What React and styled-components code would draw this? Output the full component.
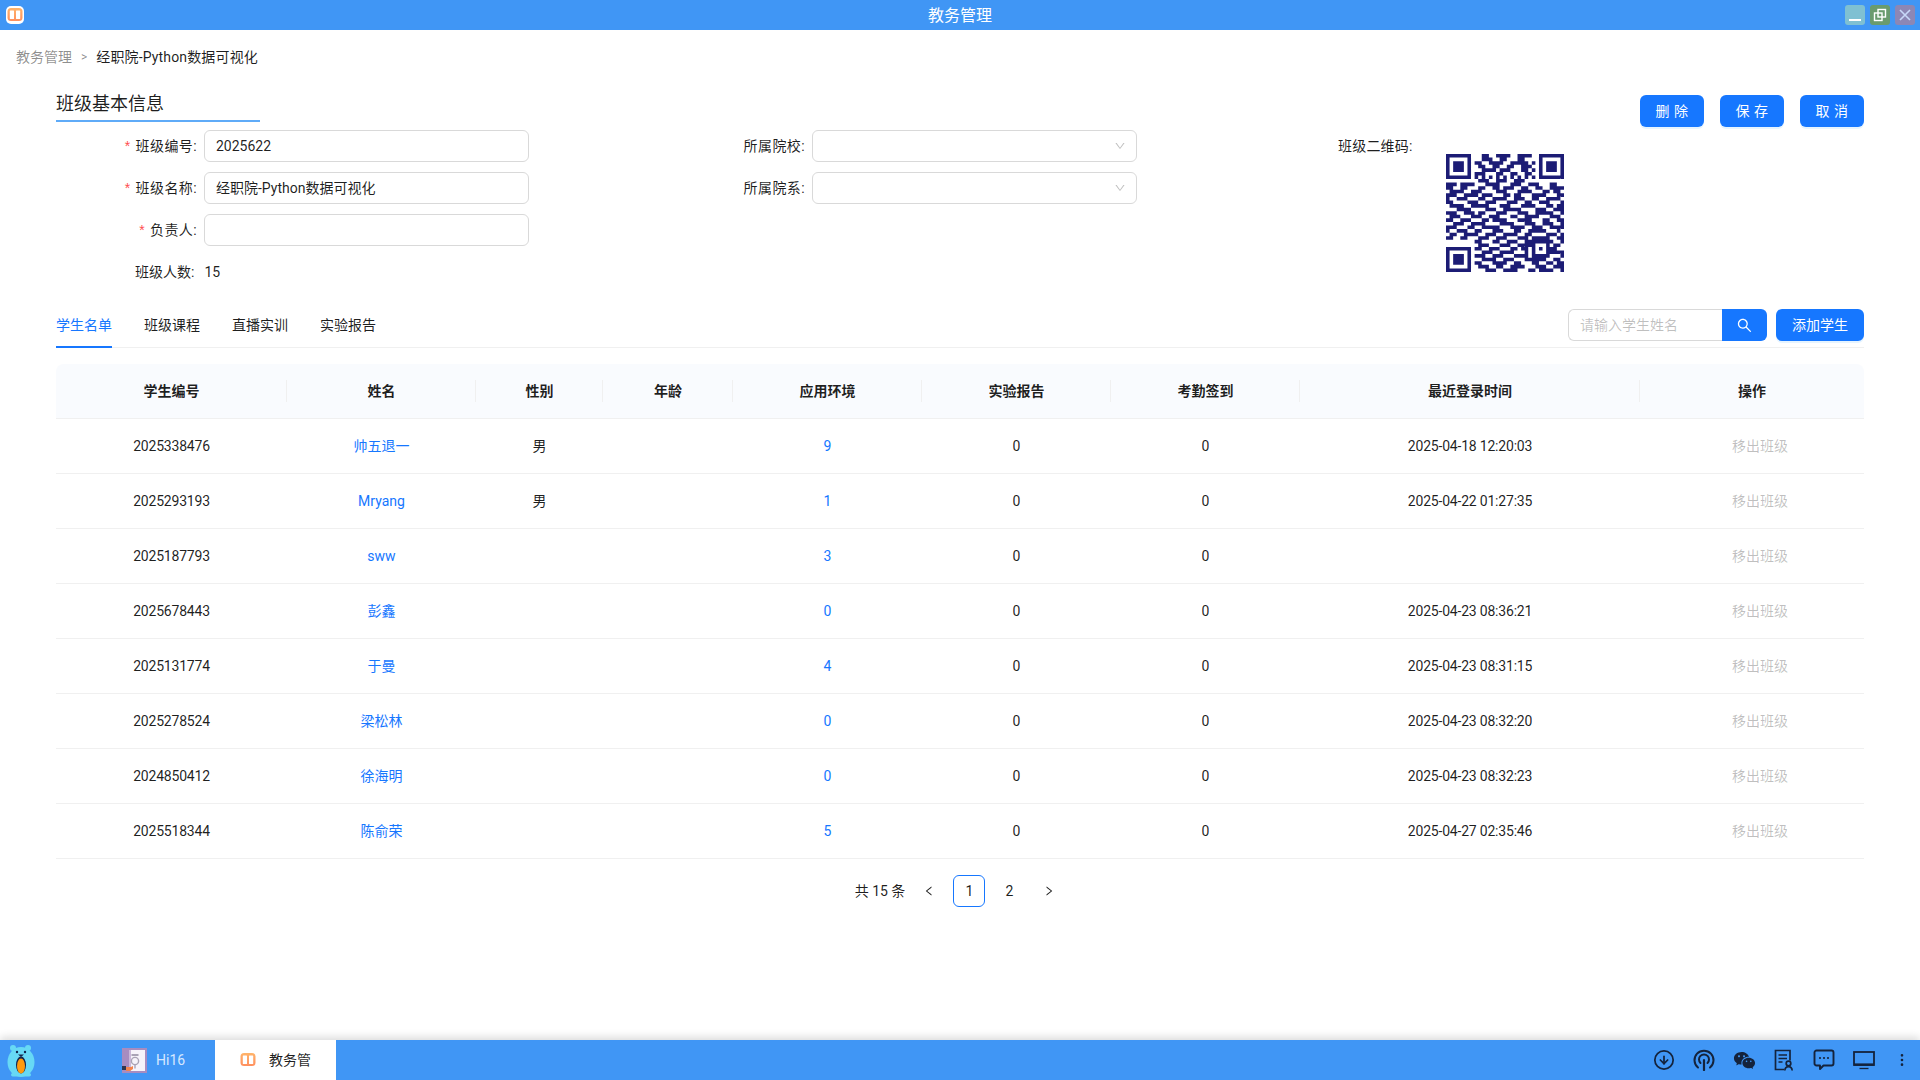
import React from "react";
import styled, { createGlobalStyle } from "styled-components";
import { AiOutlineDown, AiOutlineLeft, AiOutlineRight, AiOutlineSearch } from "react-icons/ai";
import { RiWechatFill } from "react-icons/ri";
import { CircleArrowDown, EllipsisVertical } from "lucide-react";

const FONT = `"Roboto", "Noto Sans CJK SC", sans-serif`;
const COLS = "231px 189px 127px 130px 189px 189px 189px 340px 224px";

const Global = createGlobalStyle`
  html, body { margin: 0; padding: 0; background: #fff; overflow: hidden; }
  * { box-sizing: border-box; }
  body { font-family: ${FONT}; font-size: 14px; line-height: 22px; color: rgba(0,0,0,.88); }
`;

const Page = styled.div`display: flex; flex-direction: column; width: 1920px; height: 1080px;`;
const TitleBar = styled.header`
  position: relative; flex: none; height: 30px; padding-top: 2px; background: #4096f5; display: flex; align-items: center; justify-content: center;
  color: #fff; font-size: 16px;
`;
const AppLogo = styled.span`position: absolute; left: 6px; top: 6px; display: flex;`;
const WinButtons = styled.div`position: absolute; right: 5px; top: 5px; display: flex; gap: 5px;`;
const WinButton = styled.span`
  width: 20px; height: 20px; border-radius: 3px; background: ${p => p.$bg}; display: flex; align-items: center; justify-content: center;
`;
const Content = styled.main`flex: 1; min-height: 0; display: flex; flex-direction: column;`;
const Breadcrumb = styled.nav`display: flex; align-items: center; height: 22px; margin: 16px 0 0 16px; gap: 9px;`;
const CrumbMuted = styled.span`color: rgba(0,0,0,.45);`;
const CrumbSep = styled.span`color: rgba(0,0,0,.45); font-size: 12px;`;
const CrumbCurrent = styled.span`letter-spacing: .15px;`;
const Body = styled.div`padding: 0 56px; display: flex; flex-direction: column;`;
const TopRow = styled.div`display: flex; justify-content: space-between; height: 32px; margin-top: 22px;`;
const SectionTitle = styled.h2`
  margin: 0; width: 204px; height: 32px; font-size: 18px; font-weight: 400; line-height: 28px; border-bottom: 2px solid #5fabf8;
`;
const Actions = styled.div`display: flex; gap: 16px; margin-top: 5px;`;
const Button = styled.button`
  height: 32px; width: ${p => p.$w || 64}px; padding: 0 0 0 ${p => p.$sp ? "4px" : "0"}; border: 0; border-radius: 6px; background: #1677ff; color: #fff;
  font: inherit; font-size: 14px; letter-spacing: ${p => p.$sp ? "4.5px" : "0"}; box-shadow: 0 2px 0 rgba(5,145,255,.1);
`;
const Form = styled.section`display: flex; margin-top: 8px; height: 158px;`;
const Col = styled.div`display: flex; flex-direction: column; gap: 10px; margin-left: ${p => p.$ml || 0}px;`;
const Field = styled.div`display: grid; grid-template-columns: ${p => p.$label}px 325px; align-items: center; height: 32px;`;
const Label = styled.label`text-align: right; padding-right: 7px; white-space: nowrap; letter-spacing: .4px;`;
const Star = styled.span`color: #ff4d4f; margin-right: 5px; font-family: "Liberation Sans", sans-serif;`;
const Input = styled.div`
  height: 32px; border: 1px solid #d9d9d9; border-radius: 6px; padding: 0 11px; display: flex; align-items: center; background: #fff;
`;
const Select = styled(Input)`justify-content: flex-end; padding-right: 10px; color: rgba(0,0,0,.25);`;
const Count = styled.div`display: flex; align-items: center; height: 32px; margin-left: 79px;`;
const CountValue = styled.span`margin-left: 10px;`;
const QrWrap = styled.div`display: flex;`;
const QrLabel = styled.div`height: 32px; display: flex; align-items: center; width: 108px; white-space: nowrap; letter-spacing: .2px;`;
const QrBox = styled.div`margin-top: 24px; width: 118px; height: 118px;`;

const TabRow = styled.div`
  display: flex; align-items: stretch; justify-content: space-between; height: 44px; margin-top: 16px; border-bottom: 1px solid #f0f0f0;
`;
const Tabs = styled.div`display: flex; gap: 32px;`;
const Tab = styled.div`
  position: relative; display: flex; align-items: center; height: 43px; padding-bottom: 2px; color: ${p => p.$active ? "#1677ff" : "rgba(0,0,0,.88)"};
  ${p => p.$active && `&::after{content:"";position:absolute;left:0;right:0;bottom:-1px;height:2px;background:#1677ff;}`}
`;
const Tools = styled.div`display: flex; gap: 9px; padding-top: 5px;`;
const SearchGroup = styled.div`display: flex; height: 32px;`;
const SearchInput = styled.div`
  width: 154px; height: 32px; border: 1px solid #d9d9d9; border-right: 0; border-radius: 6px 0 0 6px; padding: 0 11px; display: flex; align-items: center; color: rgba(0,0,0,.25);
`;
const SearchBtn = styled.button`
  width: 45px; height: 32px; border: 0; border-radius: 0 6px 6px 0; background: #1677ff; color: #fff; padding: 0; display: flex; align-items: center; justify-content: center; font-size: 14px;
`;

const Table = styled.div`margin-top: 16px; width: 1808px;`;
const HeadRow = styled.div`
  display: grid; grid-template-columns: ${COLS}; height: 55px; background: #f9fbfe; border-radius: 8px 8px 0 0; border-bottom: 1px solid #f0f0f0; font-weight: 600;
`;
const HeadCell = styled.div`
  position: relative; display: flex; align-items: center; justify-content: center;
  &:not(:last-child)::after { content: ""; position: absolute; right: 0; top: 16px; height: 22px; width: 1px; background: #f0f0f0; }
`;
const Row = styled.div`display: grid; grid-template-columns: ${COLS}; height: 55px; border-bottom: 1px solid #f0f0f0;`;
const Cell = styled.div`display: flex; align-items: center; justify-content: center; white-space: nowrap; letter-spacing: ${p => p.$tight ? "-.2px" : "0"};`;
const Link = styled.a`color: #1677ff; text-decoration: none;`;
const Remove = styled.span`color: rgba(0,0,0,.25); margin-left: 16px;`;

const Pager = styled.div`display: flex; align-items: center; justify-content: center; height: 32px; margin-top: 16px;`;
const Total = styled.span``;
const PageItem = styled.span`
  width: 32px; height: 32px; margin-left: 8px; border-radius: 6px; display: flex; align-items: center; justify-content: center;
  border: ${p => p.$active ? "1px solid #1677ff" : "0"};
`;
const Taskbar = styled.footer`
  position: relative; flex: none; height: 40px; background: #4096f5; display: flex; align-items: stretch; box-shadow: 0 -3px 8px rgba(0,0,0,.14);
`;
const Mascot = styled.span`display: flex; align-items: center; width: 122px; padding-left: 7px;`;
const TaskItem = styled.div`
  display: flex; align-items: center; height: 40px; width: ${p => p.$w}px; background: ${p => p.$active ? "#fff" : "transparent"};
  padding-left: ${p => p.$pl}px; color: ${p => p.$active ? "rgba(0,0,0,.88)" : "#d6e8ff"}; font-size: 14px; gap: ${p => p.$gap}px;
`;
const Tray = styled.div`margin-left: auto; display: flex; align-items: center; color: #14233c;`;
const TrayIcon = styled.span`width: ${p => p.$w || 40}px; display: flex; justify-content: center;`;

const QR_ROWS = [
"111111100011001111001111011111111",
"100000100011100110001100001000001",
"101110101100111100111110101011101",
"101110100110011001100111001011101",
"101110100011110111000110111011101",
"100000101110001100110011001000001",
"111111101010101010101010101111111",
"000000000111001110011100000000000",
"111011110001111000111001110001100",
"110011000110011011100110011001111",
"011110011100001110001111000110110",
"111001111011100011011000111100011",
"100111000110011110011100110011110",
"110000111001110001110011001110001",
"011110011111000111000111100011011",
"000111100001110011111000011100111",
"111001110110001110001110011111001",
"011100011100111000110011110001110",
"110011100011011110001111000110011",
"001110011110000111100011100111001",
"111000110011111000111100111001111",
"100111001100011100011001111100010",
"011001111001110011110011000011101",
"110011000111001110001110111110011",
"000000001100011001110011100011001",
"111111100111000111001111111110110",
"100000101100111000110110001011100",
"101110100011100111100010101001111",
"101110101110011100011110001110001",
"101110100011110011100011111100110",
"100000101100011110011000110011011",
"101110100111001100111100011100111",
"111111100001110011110001101111001",
];

function Qr() {
  const n = 33;
  const grid = QR_ROWS.map(r => r.padEnd(n, "0").slice(0, n).split("").map(c => c === "1"));
  const finder = (ox, oy) => {
    for (let y = -1; y < 8; y++) for (let x = -1; x < 8; x++) {
      const px = ox + x, py = oy + y;
      if (px < 0 || py < 0 || px >= n || py >= n) continue;
      const on = x >= 0 && x < 7 && y >= 0 && y < 7 && (x === 0 || x === 6 || y === 0 || y === 6 || (x >= 2 && x <= 4 && y >= 2 && y <= 4));
      grid[py][px] = on;
    }
  };
  finder(0, 0); finder(n - 7, 0); finder(0, n - 7);
  for (let y = -2; y <= 2; y++) for (let x = -2; x <= 2; x++) {
    grid[26 + y][26 + x] = Math.max(Math.abs(x), Math.abs(y)) !== 1;
  }
  let d = "";
  grid.forEach((r, y) => r.forEach((on, x) => { if (on) d += `M${x} ${y}h1v1h-1z`; }));
  return <svg width="118" height="118" viewBox="0 0 33 33"><path d={d} fill="#1c1c75" /></svg>;
}

const BookIcon = ({ s = 18, id }) => (
  <svg width={s} height={s} viewBox="0 0 18 18">
    <defs>
      <linearGradient id={id} x1="0" y1="0" x2="0" y2="1">
        <stop offset="0" stopColor="#ffb46a" /><stop offset="1" stopColor="#ff8f5e" />
      </linearGradient>
    </defs>
    <rect width="18" height="18" rx="5" fill="#fff" />
    <rect x="1.5" y="2" width="15" height="13" rx="3.5" fill={`url(#${id})`} />
    <rect x="3.8" y="4.5" width="4.2" height="8.5" rx=".5" fill="#fff" />
    <rect x="10" y="4.5" width="4.2" height="8.5" rx=".5" fill="#fff" />
  </svg>
);

const MascotIcon = () => (
  <svg width="28" height="33" viewBox="0 0 28 33">
    <circle cx="6" cy="4" r="3" fill="#67d9f5" /><circle cx="21" cy="4" r="3" fill="#67d9f5" />
    <ellipse cx="14" cy="18" rx="13.5" ry="15" fill="#67d9f5" />
    <rect x="4" y="29" width="20" height="3.5" rx="1.7" fill="#67d9f5" />
    <circle cx="10" cy="8" r="1.2" fill="#12264f" /><circle cx="18" cy="8" r="1.2" fill="#12264f" />
    <path d="M11 10.5h6l-3 2.5z" fill="#12264f" />
    <ellipse cx="14" cy="21" rx="5" ry="8.5" fill="#12264f" />
    <ellipse cx="14" cy="22" rx="4" ry="7.5" fill="#ff9a0d" />
  </svg>
);

const Hi16Icon = () => (
  <svg width="25" height="25" viewBox="0 0 25 25">
    <rect width="25" height="25" fill="#a78cc0" />
    <rect x="7" y="2" width="16" height="21" fill="#f6f3fa" />
    <rect x="7" y="2" width="2" height="21" fill="#c9b7d9" />
    <circle cx="13" cy="13" r="3.6" fill="none" stroke="#a9a3b5" strokeWidth="1.4" />
    <path d="M9.5 8h7v-2h-7z" fill="#a9a3b5" />
    <path d="M13 16.5v4" stroke="#a9a3b5" strokeWidth="1.4" />
    <path d="M0 18h4v4H0z" fill="#2f3550" />
    <path d="M4 19h5l2-1v3l-3 2H4z" fill="#f2844e" />
  </svg>
);

const PodcastIcon = () => (
  <svg width="22" height="22" viewBox="0 0 22 22" fill="none" stroke="currentColor" strokeWidth="2" strokeLinecap="round">
    <path d="M5 18.5a9.5 9.5 0 1 1 12 0" />
    <path d="M7.5 14a5 5 0 1 1 7 0" />
    <path d="M11 11v10" strokeWidth="2.2" />
  </svg>
);

const DocUserIcon = () => (
  <svg width="20" height="22" viewBox="0 0 20 22" fill="none" stroke="currentColor" strokeWidth="1.7">
    <path d="M10 20.5H1.5V1.5h14.5v10" />
    <path d="M4.5 6h8.5M4.5 9.5h8.5M4.5 13h4" />
    <circle cx="14.5" cy="14.5" r="2.3" />
    <path d="M10.8 21.5c.3-2.8 2-3.8 3.7-3.8s3.4 1 3.7 3.8" />
  </svg>
);

const ChatIcon = () => (
  <svg width="22" height="22" viewBox="0 0 22 22" fill="none" stroke="currentColor" strokeWidth="1.9" strokeLinejoin="round">
    <path d="M3.5 1.5h15a2 2 0 0 1 2 2v11a2 2 0 0 1-2 2h-8l-3.5 3.5v-3.5h-3.500a2 2 0 0 1-2-2v-11a2 2 0 0 1 2-2z" />
    <path d="M6.200 9h1.600M10.200 9h1.600M14.200 9h1.600" strokeWidth="2" />
  </svg>
);

const MonitorIcon = () => (
  <svg width="22" height="20" viewBox="0 0 22 20" fill="none" stroke="currentColor" strokeWidth="1.8">
    <rect x="1" y="2" width="20" height="13" />
    <path d="M1 14.500h20" strokeWidth="2.200" />
    <path d="M6.500 18.500h9" strokeWidth="1.300" />
  </svg>
);

const students = [
  ["2025338476", "帅五退一", "男", "9", "2025-04-18 12:20:03"],
  ["2025293193", "Mryang", "男", "1", "2025-04-22 01:27:35"],
  ["2025187793", "sww", "", "3", ""],
  ["2025678443", "彭鑫", "", "0", "2025-04-23 08:36:21"],
  ["2025131774", "于曼", "", "4", "2025-04-23 08:31:15"],
  ["2025278524", "梁松林", "", "0", "2025-04-23 08:32:20"],
  ["2024850412", "徐海明", "", "0", "2025-04-23 08:32:23"],
  ["2025518344", "陈俞荣", "", "5", "2025-04-27 02:35:46"],
];
const headers = ["学生编号", "姓名", "性别", "年龄", "应用环境", "实验报告", "考勤签到", "最近登录时间", "操作"];

export default function App() {
  return (
    <Page>
      <Global />
      <TitleBar>
        <AppLogo><BookIcon id="logo-a" /></AppLogo>
        教务管理
        <WinButtons>
          <WinButton $bg="#7fc0d2"><svg width="14" height="14" viewBox="0 0 14 14"><path d="M1 12h12" stroke="#fff" strokeWidth="2" /></svg></WinButton>
          <WinButton $bg="#6a9b6e"><svg width="14" height="14" viewBox="0 0 14 14" fill="none" stroke="#fff" strokeWidth="1.4"><rect x="5" y="1.5" width="7.5" height="7.5" /><rect x="1.5" y="5" width="7.5" height="7.5" /></svg></WinButton>
          <WinButton $bg="#8c87b5"><svg width="14" height="14" viewBox="0 0 14 14" stroke="#c8d8f8" strokeWidth="1.6"><path d="M2 2l10 10M12 2L2 12" /></svg></WinButton>
        </WinButtons>
      </TitleBar>
      <Content>
        <Breadcrumb>
          <CrumbMuted>教务管理</CrumbMuted>
          <CrumbSep>&gt;</CrumbSep>
          <CrumbCurrent>经职院-Python数据可视化</CrumbCurrent>
        </Breadcrumb>
        <Body>
          <TopRow>
            <SectionTitle>班级基本信息</SectionTitle>
            <Actions>
              <Button $sp>删除</Button>
              <Button $sp>保存</Button>
              <Button $sp>取消</Button>
            </Actions>
          </TopRow>
          <Form>
            <Col>
              <Field $label={148}><Label><Star>*</Star>班级编号:</Label><Input>2025622</Input></Field>
              <Field $label={148}><Label><Star>*</Star>班级名称:</Label><Input>经职院-Python数据可视化</Input></Field>
              <Field $label={148}><Label><Star>*</Star>负责人:</Label><Input /></Field>
              <Count>班级人数:<CountValue>15</CountValue></Count>
            </Col>
            <Col $ml={148}>
              <Field $label={135}><Label>所属院校:</Label><Select><AiOutlineDown size={12} /></Select></Field>
              <Field $label={135}><Label>所属院系:</Label><Select><AiOutlineDown size={12} /></Select></Field>
            </Col>
            <Col $ml={201}>
              <QrWrap>
                <QrLabel>班级二维码:</QrLabel>
                <QrBox><Qr /></QrBox>
              </QrWrap>
            </Col>
          </Form>
          <TabRow>
            <Tabs>
              <Tab $active>学生名单</Tab>
              <Tab>班级课程</Tab>
              <Tab>直播实训</Tab>
              <Tab>实验报告</Tab>
            </Tabs>
            <Tools>
              <SearchGroup>
                <SearchInput>请输入学生姓名</SearchInput>
                <SearchBtn><AiOutlineSearch size={17} /></SearchBtn>
              </SearchGroup>
              <Button $w={88}>添加学生</Button>
            </Tools>
          </TabRow>
          <Table>
            <HeadRow>{headers.map(h => <HeadCell key={h}>{h}</HeadCell>)}</HeadRow>
            {students.map(s => (
              <Row key={s[0]}>
                <Cell $tight>{s[0]}</Cell>
                <Cell><Link>{s[1]}</Link></Cell>
                <Cell>{s[2]}</Cell>
                <Cell />
                <Cell><Link>{s[3]}</Link></Cell>
                <Cell>0</Cell>
                <Cell>0</Cell>
                <Cell $tight>{s[4]}</Cell>
                <Cell><Remove>移出班级</Remove></Cell>
              </Row>
            ))}
          </Table>
          <Pager>
            <Total>共 15 条</Total>
            <PageItem><AiOutlineLeft size={12} /></PageItem>
            <PageItem $active>1</PageItem>
            <PageItem>2</PageItem>
            <PageItem><AiOutlineRight size={12} /></PageItem>
          </Pager>
        </Body>
      </Content>
      <Taskbar>
        <Mascot><MascotIcon /></Mascot>
        <TaskItem $w={93} $pl={0} $gap={9}><Hi16Icon />Hi16</TaskItem>
        <TaskItem $w={121} $pl={24} $gap={12} $active><BookIcon id="logo-b" />教务管</TaskItem>
        <Tray>
          <TrayIcon><CircleArrowDown size={22} strokeWidth={1.9} /></TrayIcon>
          <TrayIcon><PodcastIcon /></TrayIcon>
          <TrayIcon><RiWechatFill size={23} /></TrayIcon>
          <TrayIcon><DocUserIcon /></TrayIcon>
          <TrayIcon><ChatIcon /></TrayIcon>
          <TrayIcon><MonitorIcon /></TrayIcon>
          <TrayIcon $w={36}><EllipsisVertical size={16} /></TrayIcon>
        </Tray>
      </Taskbar>
    </Page>
  );
}
